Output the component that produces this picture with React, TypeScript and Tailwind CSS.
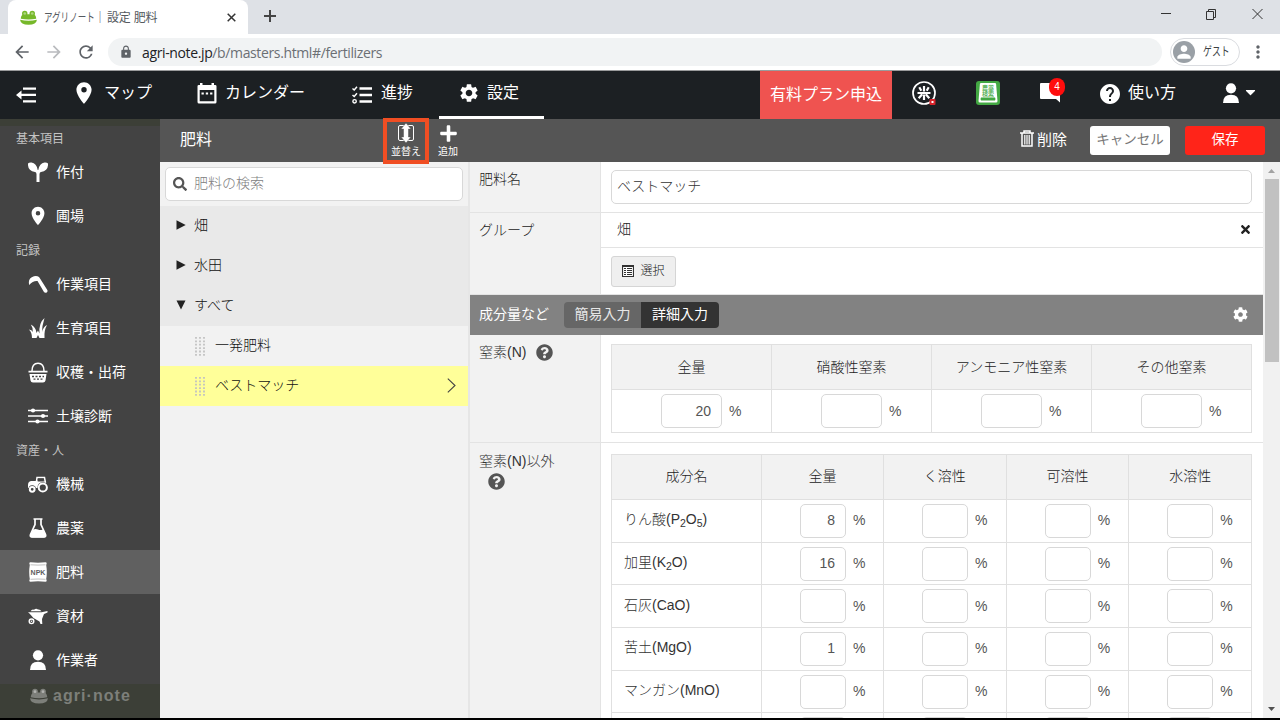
import type { ReactNode } from "react";
import clsx from "clsx";
import {
  FaPlus,
  FaSearch,
  FaQuestionCircle,
  FaTimes,
  FaCog,
  FaCaretDown,
} from "react-icons/fa";
import {
  MdArrowBack,
  MdArrowForward,
  MdRefresh,
  MdLock,
  MdLocationOn,
  MdSettings,
  MdHelp,
  MdMoreVert,
  MdPerson,
} from "react-icons/md";

type IconProps = { className?: string };

function FrogIcon({ className }: IconProps) {
  return (
    <svg className={className} viewBox="0 0 18 16">
      <path
        d="M.8 9.300C.8 6.800 1.800 5.500 2.800 5L7 4.500h4l4.200.5C16.200 5.500 17.200 6.800 17.200 9.300Q9 11 .8 9.300Z"
        fill="currentColor"
      />
      <path
        d="M0 10.300Q9 12.600 18 10.300Q17.400 15.600 9 15.600Q.6 15.600 0 10.300Z"
        fill="currentColor"
      />
      <circle cx="5" cy="3.700" r="2.900" fill="currentColor" />
      <circle cx="13" cy="3.700" r="2.900" fill="currentColor" />
      <circle cx="5" cy="3.700" r="1.400" fill="#fff" fillOpacity=".4" />
      <circle cx="13" cy="3.700" r="1.400" fill="#fff" fillOpacity=".4" />
    </svg>
  );
}

function CollapseIcon({ className }: IconProps) {
  return (
    <svg className={className} viewBox="0 0 20 16" fill="currentColor">
      <path d="M0 8l5.500-4.500v3.300H20v2.200H5.500v3.500z" />
      <path d="M7 .5h13V2.700H7zM7 13.300h13v2.200H7z" />
    </svg>
  );
}

function CalendarIcon({ className }: IconProps) {
  return (
    <svg className={className} viewBox="0 0 20 21" fill="currentColor">
      <path
        fillRule="evenodd"
        d="M3 0h2.500v2h9V0H17v2h1.200q1.300 0 1.300 1.300V19q0 1.500-1.500 1.500H2Q.5 20.500.5 19V3.300Q.5 2 1.800 2H3zM2.700 7v11.300h14.600V7z"
      />
      <path d="M4.500 9.500h2.300v2H4.500zM8.800 9.500h2.300v2H8.800zM13.100 9.500h2.300v2h-2.300z" />
    </svg>
  );
}

function ProgressIcon({ className }: IconProps) {
  return (
    <svg
      className={className}
      viewBox="0 0 20 18"
      fill="none"
      stroke="currentColor"
    >
      <path d="M7.500 2.500H20M7.500 9H20M7.500 15.500H20" strokeWidth="2.400" />
      <path d="M.5 2.500l1.700 1.500L5 .8M.5 9l1.700 1.500L5 7.300" strokeWidth="1.500" />
      <circle cx="2.600" cy="15.300" r="1.700" strokeWidth="1.400" />
    </svg>
  );
}

function SortIcon({ className }: IconProps) {
  return (
    <svg className={className} viewBox="0 0 18 20">
      <rect
        x="1.500"
        y="2.500"
        width="15"
        height="15"
        rx="1.500"
        fill="none"
        stroke="currentColor"
      />
      <path
        d="M9 0l5 6h-2.500v8H14l-5 6-5-6h2.500V6H4z"
        fill="currentColor"
        stroke="#555"
        strokeWidth=".5"
      />
    </svg>
  );
}

function TrashIcon({ className }: IconProps) {
  return (
    <svg
      className={className}
      viewBox="0 0 14 17"
      fill="none"
      stroke="currentColor"
      strokeWidth="1.500"
    >
      <path d="M0 3h14M4 3V1h6v2M2 3v13h10V3" />
      <path d="M4.800 5V14.500M7 5V14.500M9.200 5V14.500" strokeWidth="1.200" />
    </svg>
  );
}

function RiceIcon({ className }: IconProps) {
  return (
    <svg
      className={className}
      viewBox="0 0 24 24"
      fill="none"
      stroke="currentColor"
    >
      <circle cx="12" cy="12" r="11" strokeWidth="1.700" />
      <path
        d="M12 5v5.500M12 13.500V19M5.500 12h13M7.300 6.300l2 3.500M16.700 6.300l-2 3.500M10.200 13.300l-3.500 4M13.800 13.300l3.500 4"
        strokeWidth="2.200"
      />
      <rect x="17.500" y="18" width="6" height="6" rx="1" fill="#d8232a" stroke="none" />
      <rect x="19.500" y="20" width="2" height="2" fill="#fff" stroke="none" />
    </svg>
  );
}

function PersonIcon({ className }: IconProps) {
  return (
    <svg className={className} viewBox="0 0 18 20" fill="currentColor">
      <circle cx="9" cy="5.300" r="5.100" />
      <path d="M1 20Q1 11.800 9 11.800T17 20z" />
    </svg>
  );
}

function SproutIcon({ className }: IconProps) {
  return (
    <svg className={className} viewBox="0 0 20 20" fill="currentColor">
      <path d="M0 1.500Q1 .3 3.500.5 8.500 1 9.700 8h.6Q11.500 1 16.500.5 19 .3 20 1.500 20.500 9 13 10q-1.300.2-1.500 2V20h-3v-8q-.2-1.800-1.500-2Q-.5 9 0 1.500z" />
    </svg>
  );
}

function SickleIcon({ className }: IconProps) {
  return (
    <svg className={className} viewBox="0 0 20 20" fill="currentColor">
      <path d="M1.200 11Q-.5 4 6 2.200 9 1.500 11 3l1.200 1.800L19.300 16q.8 2-1 2.700-1.600.5-2.500-1L9.500 7Q5 6.500 1.200 11z" />
    </svg>
  );
}

function GrassIcon({ className }: IconProps) {
  return (
    <svg className={className} viewBox="0 0 20 20" fill="currentColor">
      <path d="M4 20Q4 14 .8 11.500q3.200.3 4 2.500Q4.800 9 2.800 6.500 8 9 8.500 15 10 12 10 12.500l1.500 3Q10.500 5 16.500 0 14 8 14 14 15.500 8.500 19 7q-3 5-2.500 13h-5L10 17l-1.500 3z" />
    </svg>
  );
}

function BasketIcon({ className }: IconProps) {
  return (
    <svg className={className} viewBox="0 0 20 21">
      <path
        d="M4 9Q4 1.200 10 1.200T16 9"
        fill="none"
        stroke="currentColor"
        strokeWidth="1.500"
      />
      <path
        d="M.5 8.800h19v1.800H.5zM1.500 12h17l-1 6.500q-.4 2-2.500 2H5q-2.100 0-2.500-2z"
        fill="currentColor"
      />
      <path
        d="M4 14.500h2M7.500 14.500h2M11 14.500h2M14.500 14.500h1.500M5.500 17.200h2M9 17.200h2M12.500 17.200h2"
        stroke="#434343"
        strokeWidth="1.300"
      />
    </svg>
  );
}

function SlidersIcon({ className }: IconProps) {
  return (
    <svg className={className} viewBox="0 0 20 16">
      <path
        d="M0 2.500h20M0 8h20M0 13.500h20"
        stroke="currentColor"
        strokeWidth="1.500"
      />
      <g fill="currentColor">
        <circle cx="5" cy="2.500" r="2.100" />
        <circle cx="15" cy="8" r="2.100" />
        <circle cx="9.500" cy="13.500" r="2.100" />
      </g>
    </svg>
  );
}

function TractorIcon({ className }: IconProps) {
  return (
    <svg className={className} viewBox="0 0 20 17">
      <path
        d="M8 9L9 1.500h7.500L17.500 7"
        fill="none"
        stroke="currentColor"
        strokeWidth="1.500"
      />
      <path
        d="M0 12V9q0-3.500 3-4h4.500L9 4.500h7L18 8v4z"
        fill="currentColor"
      />
      <path d="M10 2.500h5.500l.5 3h-6.300z" fill="#434343" />
      <circle cx="4.200" cy="13" r="3.700" fill="#434343" />
      <circle cx="14.800" cy="11.200" r="5.300" fill="#434343" />
      <g fill="none" stroke="currentColor" strokeWidth="2">
        <circle cx="4.200" cy="13.300" r="2.400" />
        <circle cx="14.800" cy="11.500" r="4.100" />
      </g>
    </svg>
  );
}

function FlaskIcon({ className }: IconProps) {
  return (
    <svg className={className} viewBox="0 0 18 20">
      <path
        d="M4.500 1h9M6 1v5.500L1.500 16.500q-.8 2.500 1.500 2.500h12q2.300 0 1.500-2.500L12 6.500V1"
        fill="none"
        stroke="currentColor"
        strokeWidth="1.700"
      />
      <path
        d="M4.300 11.500q2.400-1 4.700 0t4.700 0L17 17q0 2.500-2 2.500H3Q1 19.500 1 17z"
        fill="currentColor"
      />
    </svg>
  );
}

function BagIcon({ className }: IconProps) {
  return (
    <svg className={className} viewBox="0 0 18 20">
      <path
        d="M1.500.3Q9 1 16.500.3q1.200 0 1.200 1.200L17.200 3q1.200 7 0 14l.5 1.500q0 1.200-1.200 1.200Q9 19 1.500 19.700.3 19.700.3 18.500L.8 17Q-.4 10 .8 3L.3 1.500Q.3.300 1.500.300z"
        fill="currentColor"
      />
      <path
        d="M1.500 2.800q7.500.6 15 0M1.500 17.300q7.500-.6 15 0"
        fill="none"
        stroke="#606060"
        strokeWidth=".4"
      />
      <text
        x="9"
        y="12.500"
        textAnchor="middle"
        fontSize="7"
        fontWeight="700"
        fontFamily="Liberation Sans, sans-serif"
        fill="#606060"
      >
        NPK
      </text>
    </svg>
  );
}

function BarrowIcon({ className }: IconProps) {
  return (
    <svg className={className} viewBox="0 0 20 17">
      <path
        d="M0 4.200h13.500L19.500 3v1.500L16 6l-2 5 .3 5h-1.800L11.500 13.500 5.500 10 1.500 5.500z"
        fill="currentColor"
      />
      <path
        d="M2.500 3.200Q4 1 6 1.800 8 0 10 1.500q2-.5 3.500 1.700z"
        fill="currentColor"
      />
      <circle
        cx="3.500"
        cy="13.300"
        r="2.300"
        fill="none"
        stroke="currentColor"
        strokeWidth="1.400"
      />
      <circle cx="3.500" cy="13.300" r=".8" fill="currentColor" />
    </svg>
  );
}

type MenuSection = {
  title: string;
  items: { label: string; icon: ReactNode; active?: boolean }[];
};

const menu: MenuSection[] = [
  {
    title: "基本項目",
    items: [
      { label: "作付", icon: <SproutIcon className="w-5 h-5" /> },
      { label: "圃場", icon: <MdLocationOn className="w-[22px] h-[22px]" /> },
    ],
  },
  {
    title: "記録",
    items: [
      { label: "作業項目", icon: <SickleIcon className="w-5 h-5" /> },
      { label: "生育項目", icon: <GrassIcon className="w-5 h-5" /> },
      { label: "収穫・出荷", icon: <BasketIcon className="w-5 h-[21px]" /> },
      { label: "土壌診断", icon: <SlidersIcon className="w-5 h-4" /> },
    ],
  },
  {
    title: "資産・人",
    items: [
      { label: "機械", icon: <TractorIcon className="w-5 h-[17px]" /> },
      { label: "農薬", icon: <FlaskIcon className="w-[18px] h-5" /> },
      { label: "肥料", icon: <BagIcon className="w-[18px] h-5" />, active: true },
      { label: "資材", icon: <BarrowIcon className="w-5 h-[17px]" /> },
      { label: "作業者", icon: <PersonIcon className="w-[18px] h-5" /> },
    ],
  },
];

const nitrogenColumns = [
  { label: "全量", value: "20" },
  { label: "硝酸性窒素", value: "" },
  { label: "アンモニア性窒素", value: "" },
  { label: "その他窒素", value: "" },
];

const componentColumns = ["成分名", "全量", "く溶性", "可溶性", "水溶性"];

const components: { name: ReactNode; total: string }[] = [
  {
    name: (
      <>
        りん酸(P<Sub>2</Sub>O<Sub>5</Sub>)
      </>
    ),
    total: "8",
  },
  {
    name: (
      <>
        加里(K<Sub>2</Sub>O)
      </>
    ),
    total: "16",
  },
  { name: "石灰(CaO)", total: "" },
  { name: "苦土(MgO)", total: "1" },
  { name: "マンガン(MnO)", total: "" },
];

function Sub({ children }: { children: ReactNode }) {
  return <sub className="text-[10.500px] leading-none">{children}</sub>;
}

function ValueBox({ value, wide }: { value?: string; wide?: boolean }) {
  return (
    <div
      className={clsx(
        "h-[34px] flex items-center justify-end pr-[10px] bg-white border border-[#d8d8d8] rounded-[5px] text-[14px] text-[#555]",
        wide ? "w-[61px]" : "w-[46px]"
      )}
    >
      {value}
    </div>
  );
}

function PercentField({ value, wide }: { value: string; wide?: boolean }) {
  return (
    <div
      className={clsx(
        "flex items-center gap-[7px]",
        wide ? "pl-[49px]" : "pl-[38px]"
      )}
    >
      <ValueBox value={value} wide={wide} />
      <span className="text-[14px] text-[#555]">%</span>
    </div>
  );
}

function Browser() {
  return (
    <header className="h-[71px] shrink-0 bg-white border-b border-[#9a9b9c] text-[#5f6368]">
      <div className="h-[34px] bg-[#dee1e6] flex pl-2">
        <div className="w-[240px] h-full bg-white rounded-t-lg flex items-center pl-3">
          <FrogIcon className="w-[17px] h-[15px] text-[#76b82a]" />
          <span className="ml-[7px] pt-px text-[12px] flex-1 text-[#555a60] whitespace-nowrap">
            <span className="inline-block w-[51px] origin-left scale-x-[0.71]">
              アグリノート
            </span>
            <span className="-ml-px mr-px">｜</span>
            <span className="tracking-[-0.2px]">設定 肥料</span>
          </span>
          <svg className="w-[9px] h-[9px] mr-3 text-[#333]" viewBox="0 0 9 9">
            <path
              d="M.7.7l7.600 7.600M8.300.7L.7 8.300"
              stroke="currentColor"
              strokeWidth="1.500"
            />
          </svg>
        </div>
        <svg className="w-3 h-3 ml-4 mt-[10px] text-[#444]" viewBox="0 0 12 12">
          <path d="M6 0v12M0 6h12" stroke="currentColor" strokeWidth="2" />
        </svg>
        <svg
          className="w-[104px] h-3 ml-auto mr-[17px] mt-2 text-[#333]"
          viewBox="0 0 104 12"
          fill="none"
          stroke="currentColor"
        >
          <path d="M2 5.500h10M47.500 3.500h7v8h-7zM49.500 3.500v-2h7v8h-2M93.500 1l10 10M103.500 1l-10 10" />
        </svg>
      </div>
      <div className="h-9 flex items-center pl-3">
        <MdArrowBack className="w-5 h-5" />
        <MdArrowForward className="w-5 h-5 ml-3 text-[#b9bbbe]" />
        <MdRefresh className="w-5 h-5 ml-3" />
        <div className="ml-3 w-[1054px] h-7 rounded-full bg-[#f1f3f4] flex items-center pl-[11px]">
          <MdLock className="w-[14px] h-[14px]" />
          <span className="ml-[9px] font-['Open_Sans'] text-[14px] tracking-[-0.37px] text-[#6b6f74]">
            <span className="text-[#202124]">agri-note.jp</span>
            /b/masters.html#/fertilizers
          </span>
        </div>
        <div className="ml-2 w-[70px] h-7 border border-[#dadce0] rounded-full flex items-center pl-[2px]">
          <span className="w-[22px] h-[22px] rounded-full bg-[#9aa0a6] text-white overflow-hidden flex justify-center items-center">
            <MdPerson className="w-5 h-5" />
          </span>
          <span className="ml-2 text-[12px] w-9 origin-left scale-x-[0.74] text-[#3c4043] whitespace-nowrap">
            ゲスト
          </span>
        </div>
        <MdMoreVert className="w-5 h-5 ml-2" />
      </div>
    </header>
  );
}

function NavItem({
  icon,
  label,
  className,
}: {
  icon: ReactNode;
  label: string;
  className?: string;
}) {
  return (
    <div className={clsx("h-full flex items-center shrink-0", className)}>
      <span className="shrink-0">{icon}</span>
      <span className="ml-auto whitespace-nowrap">{label}</span>
    </div>
  );
}

function GlobalNav() {
  return (
    <nav className="h-12 shrink-0 bg-[#1c2023] text-white text-[16px] flex">
      <CollapseIcon className="w-5 h-4 ml-4 mt-4" />
      <NavItem
        className="w-[79px] ml-[37px] pb-1"
        icon={<MdLocationOn className="w-[26px] h-[26px] -ml-0.5" />}
        label="マップ"
      />
      <NavItem
        className="w-[108px] ml-[45px] pb-1"
        icon={<CalendarIcon className="w-5 h-[21px]" />}
        label="カレンダー"
      />
      <NavItem
        className="w-[61px] ml-[47px] pb-1"
        icon={<ProgressIcon className="w-5 h-[18px] mt-[3px]" />}
        label="進捗"
      />
      <div className="ml-[26px] w-[105px] h-full border-b-[3px] border-white flex px-5">
        <NavItem
          className="w-[60px] pb-px"
          icon={<MdSettings className="w-[22px] h-[22px] -ml-px" />}
          label="設定"
        />
      </div>
      <div className="ml-[216px] w-[132px] h-full bg-[#ef5350] flex items-center justify-center pb-px">
        有料プラン申込
      </div>
      <RiceIcon className="w-6 h-6 ml-5 mt-[10px]" />
      <div className="ml-10 mt-[10px] w-6 h-6 rounded-[3px] bg-[#43a843]">
        <svg className="w-6 h-6" viewBox="0 0 24 24">
          <path
            d="M5 2h14q1 0 1.100 1L21.500 20q0 1.500-1.500 1.500H4q-1.500 0-1.500-1.500L3.900 3Q4 2 5 2z"
            fill="#fff"
          />
          <path d="M5 16.500h14q1 1.500 0 3H5q-1-1.500 0-3z" fill="#43a843" />
          <g fill="#43a843" fontSize="6" fontWeight="500" textAnchor="middle">
            <text x="12" y="8.600">農薬</text>
            <text x="12" y="14.600">検索</text>
          </g>
        </svg>
      </div>
      <div className="relative ml-10 mt-3 w-6 h-6">
        <svg className="w-5 h-5" viewBox="0 0 20 20" fill="currentColor">
          <path d="M1 0h18q1 0 1 1v18.500L16 16H1q-1 0-1-1V1q0-1 1-1z" />
        </svg>
        <span className="absolute left-[9px] -top-[5px] w-4 h-[18px] rounded-full bg-[#ff0d0d] text-[10px] leading-[18px] text-center">
          4
        </span>
      </div>
      <NavItem
        className="w-[77px] ml-[35px] pb-1"
        icon={<MdHelp className="w-6 h-6 mt-[2px] -ml-[1px]" />}
        label="使い方"
      />
      <PersonIcon className="w-[18px] h-5 ml-[46px] mt-3" />
      <FaCaretDown className="w-[15px] h-4 ml-[3px] mt-[13px]" />
    </nav>
  );
}

function Sidebar() {
  return (
    <aside className="w-40 shrink-0 bg-[#434343] border-t-[7px] border-[#3c3f37] text-white flex flex-col">
      {menu.map((section) => (
        <div key={section.title}>
          <h2 className="h-6 pl-4 text-[12px] leading-[27px] text-[#c4c4c4]">
            {section.title}
          </h2>
          {section.items.map(({ label, icon, active }) => (
            <div
              key={label}
              className={clsx(
                "h-11 flex items-center pl-[27px] text-[14px]",
                active && "bg-[#606060]"
              )}
            >
              <span className="w-[22px] flex justify-center">{icon}</span>
              <span className="ml-[7px] pt-px">{label}</span>
            </div>
          ))}
        </div>
      ))}
      <div className="mt-[2px] flex-1 bg-[#3c3f37] text-[#7d7f7a] flex items-start pl-[30px] pt-[3px]">
        <FrogIcon className="w-[18px] h-4 mt-px" />
        <span className="ml-[5px] text-[16px] leading-[17px] font-bold tracking-[1.050px] font-['Liberation_Sans']">
          agri·note
        </span>
      </div>
    </aside>
  );
}

function Toolbar() {
  return (
    <div className="h-[43px] shrink-0 bg-[#555] text-white flex items-center">
      <h1 className="ml-5 text-[16px] w-[203px] pb-[2px]">肥料</h1>
      <button className="relative z-10 w-[46px] h-[46px] shrink-0 border-4 border-[#f04e23] flex flex-col items-center">
        <SortIcon className="w-[18px] h-5 mt-px shrink-0" />
        <span className="text-[10px] leading-[17px] whitespace-nowrap">
          並替え
        </span>
      </button>
      <button className="w-[38px] flex flex-col items-center pt-[2px]">
        <FaPlus className="w-[17px] h-[19px]" />
        <span className="text-[10px] leading-[17px]">追加</span>
      </button>
      <button className="ml-auto flex items-center text-[15px]">
        <TrashIcon className="w-[14px] h-[17px] mb-1 mr-[3px]" />
        削除
      </button>
      <button className="ml-[23px] w-20 h-[29px] rounded-[3px] bg-white text-[13.500px] text-[#777] whitespace-nowrap">
        キャンセル
      </button>
      <button className="ml-[15px] mr-[15px] w-20 h-[29px] rounded-[3px] bg-[#ff2419] text-[13.500px]">
        保存
      </button>
    </div>
  );
}

function Handle() {
  return (
    <svg className="w-[10px] h-[19px]" viewBox="0 0 10 19">
      <path
        d="M1 0v19M5 0v19M9 0v19"
        stroke="#c2c2c2"
        strokeWidth="1.800"
        strokeDasharray="1.800 1.600"
      />
    </svg>
  );
}

function FertilizerList() {
  return (
    <div className="w-[310px] shrink-0 bg-[#f2f2f2] border-r-2 border-[#e6e6e6] text-[14px] text-[#111] font-light">
      <div className="mt-[5px] mb-[5px] ml-[5px] w-[298px] h-[34px] bg-white border border-[#d8d8d8] rounded-[5px] flex items-center pl-[7px] text-[#808080]">
        <FaSearch className="w-[14px] h-[14px] text-[#555]" />
        <span className="ml-[7px] pb-px">肥料の検索</span>
      </div>
      {["畑", "水田", "すべて"].map((name, i) => (
        <div key={name} className="h-10 bg-[#e9e9e9] flex items-center pl-4">
          <svg
            className="w-[10px] h-[10px] mb-[2px] text-[#222]"
            viewBox="0 0 10 10"
          >
            <path
              d={i === 2 ? "M.5 .5h9L5 9.500z" : "M.5 .3v9.400L9.700 5z"}
              fill="currentColor"
            />
          </svg>
          <span className="ml-2 pb-px">{name}</span>
        </div>
      ))}
      <div className="h-10 flex items-center pl-[35px]">
        <Handle />
        <span className="ml-[10px] pb-px">一発肥料</span>
      </div>
      <div className="h-10 flex items-center pl-[35px] bg-[#ffff99]">
        <Handle />
        <span className="ml-[10px] pb-px">ベストマッチ</span>
        <svg className="w-[9px] h-[15px] ml-auto mr-3 mb-px" viewBox="0 0 9 15">
          <path
            d="M.8.7L8 7.500.8 14.300"
            fill="none"
            stroke="#444"
            strokeWidth="1.100"
          />
        </svg>
      </div>
    </div>
  );
}

function FormRow({
  label,
  className,
  children,
}: {
  label: ReactNode;
  className: string;
  children: ReactNode;
}) {
  return (
    <div className={clsx("flex shrink-0 border-b border-[#e3e3e3]", className)}>
      <div className="w-[131px] shrink-0 bg-[#f2f2f2] border-r border-[#e3e3e3] pl-[9px] text-[14px] leading-[21px]">
        {label}
      </div>
      <div className="flex-1">{children}</div>
    </div>
  );
}

function FertilizerForm() {
  return (
    <div className="w-[793px] shrink-0 flex flex-col overflow-hidden text-[14px] text-[#222] font-light">
      <FormRow className="h-[51px]" label={<p className="mt-[7px]">肥料名</p>}>
        <div className="mt-2 ml-[10px] w-[641px] h-[34px] border border-[#d8d8d8] rounded-[5px] pl-[5px] leading-[31px] text-[#333]">
          ベストマッチ
        </div>
      </FormRow>
      <FormRow className="h-[82px]" label={<p className="mt-[7px]">グループ</p>}>
        <div className="h-[35px] border-b border-[#e3e3e3] flex items-center pl-4 pr-[11px] pb-[2px]">
          畑
          <FaTimes className="w-[13px] h-[13px] ml-auto text-[#222]" />
        </div>
        <button className="mt-[8px] ml-[10px] w-[65px] h-[31px] bg-[#efefef] border border-[#d5d5d5] rounded-[3px] flex items-center justify-center text-[12px] pb-[2px]">
          <svg className="w-3 h-3 mr-[6px]" viewBox="0 0 12 12">
            <path
              d="M.5.5h11v11H.5z"
              fill="#fff"
              stroke="#333"
              strokeWidth="1.200"
            />
            <path
              d="M2 3.500h2M2 5.500h2M2 7.500h2M2 9.500h2M5 3.500h5M5 5.500h5M5 7.500h5M5 9.500h5M1 1.500h10"
              stroke="#333"
            />
          </svg>
          選択
        </button>
      </FormRow>
      <div className="h-[40px] shrink-0 bg-[#828282] text-white flex items-center pl-[9px] pr-[15px] font-normal">
        <span className="w-[85px] pb-px">成分量など</span>
        <div className="flex h-[26px] leading-[25px] rounded overflow-hidden text-center">
          <span className="w-[77px] bg-[#666] text-[#e6e6e6]">簡易入力</span>
          <span className="w-[78px] bg-[#333]">詳細入力</span>
        </div>
        <FaCog className="w-[15px] h-[15px] ml-auto mb-px" />
      </div>
      <FormRow
        className="h-[108px]"
        label={
          <p className="mt-[7px] flex items-center">
            <span className="text-[#333]">窒素(N)</span>
            <FaQuestionCircle className="w-[17px] h-[17px] ml-[10px] text-[#555]" />
          </p>
        }
      >
        <div className="mt-[9px] ml-[10px] w-[641px] grid grid-cols-4 border-t border-l border-[#e0e0e0]">
          {nitrogenColumns.map(({ label, value }) => (
            <div key={label} className="border-r border-[#e0e0e0]">
              <div className="h-[45px] bg-[#f2f2f2] border-b border-[#e0e0e0] text-center leading-[44px]">
                {label}
              </div>
              <div className="h-[43px] border-b border-[#e0e0e0] flex items-center">
                <PercentField value={value} wide />
              </div>
            </div>
          ))}
        </div>
      </FormRow>
      <FormRow
        className="h-[400px]"
        label={
          <div className="mt-[8px] text-[#333]">
            窒素(N)以外
            <FaQuestionCircle className="w-[17px] h-[17px] ml-[9px] mt-px text-[#555]" />
          </div>
        }
      >
        <table className="mt-[11px] ml-[10px] w-[641px] table-fixed border-collapse">
          <thead>
            <tr className="h-[45px] bg-[#f2f2f2]">
              {componentColumns.map((name, i) => (
                <th
                  key={name}
                  className={clsx(
                    "border border-[#e0e0e0] font-light pb-px",
                    i === 0 && "w-[150px]",
                    i === 1 && "w-[122px]"
                  )}
                >
                  {name}
                </th>
              ))}
            </tr>
          </thead>
          <tbody>
            {components.map(({ name, total }, i) => (
              <tr key={i} className="h-[42.700px]">
                <td className="border border-[#e0e0e0] pl-3 pb-[2px] text-[#333]">
                  {name}
                </td>
                {[total, "", "", ""].map((value, j) => (
                  <td key={j} className="border border-[#e0e0e0] p-0">
                    <PercentField value={value} />
                  </td>
                ))}
              </tr>
            ))}
            <tr className="h-[42.700px]">
              <td className="border border-[#e0e0e0]" />
              {[0, 1, 2, 3].map((j) => (
                <td key={j} className="border border-[#e0e0e0] p-0 pl-[38px]">
                  <ValueBox />
                </td>
              ))}
            </tr>
          </tbody>
        </table>
      </FormRow>
    </div>
  );
}

function Scrollbar() {
  return (
    <div className="w-[17px] shrink-0 bg-[#f1f1f1] flex flex-col items-center py-[7px]">
      <svg className="w-[7px] h-1" viewBox="0 0 7 4">
        <path d="M0 4h7L3.500 0z" fill="#a3a3a3" />
      </svg>
      <div className="mt-[6px] w-[14px] h-[183px] bg-[#c1c1c1]" />
      <svg className="w-[7px] h-1 mt-auto" viewBox="0 0 7 4">
        <path d="M0 0h7L3.500 4z" fill="#505050" />
      </svg>
    </div>
  );
}

export default function App() {
  return (
    <div className="w-[1280px] h-[720px] overflow-hidden flex flex-col bg-white border-b-2 border-black text-[#444] font-['Liberation_Sans','Noto_Sans_CJK_JP',sans-serif]">
      <Browser />
      <GlobalNav />
      <div className="flex flex-1 min-h-0">
        <Sidebar />
        <main className="flex-1 min-w-0 flex flex-col">
          <Toolbar />
          <div className="flex flex-1 min-h-0">
            <FertilizerList />
            <FertilizerForm />
            <Scrollbar />
          </div>
        </main>
      </div>
    </div>
  );
}
